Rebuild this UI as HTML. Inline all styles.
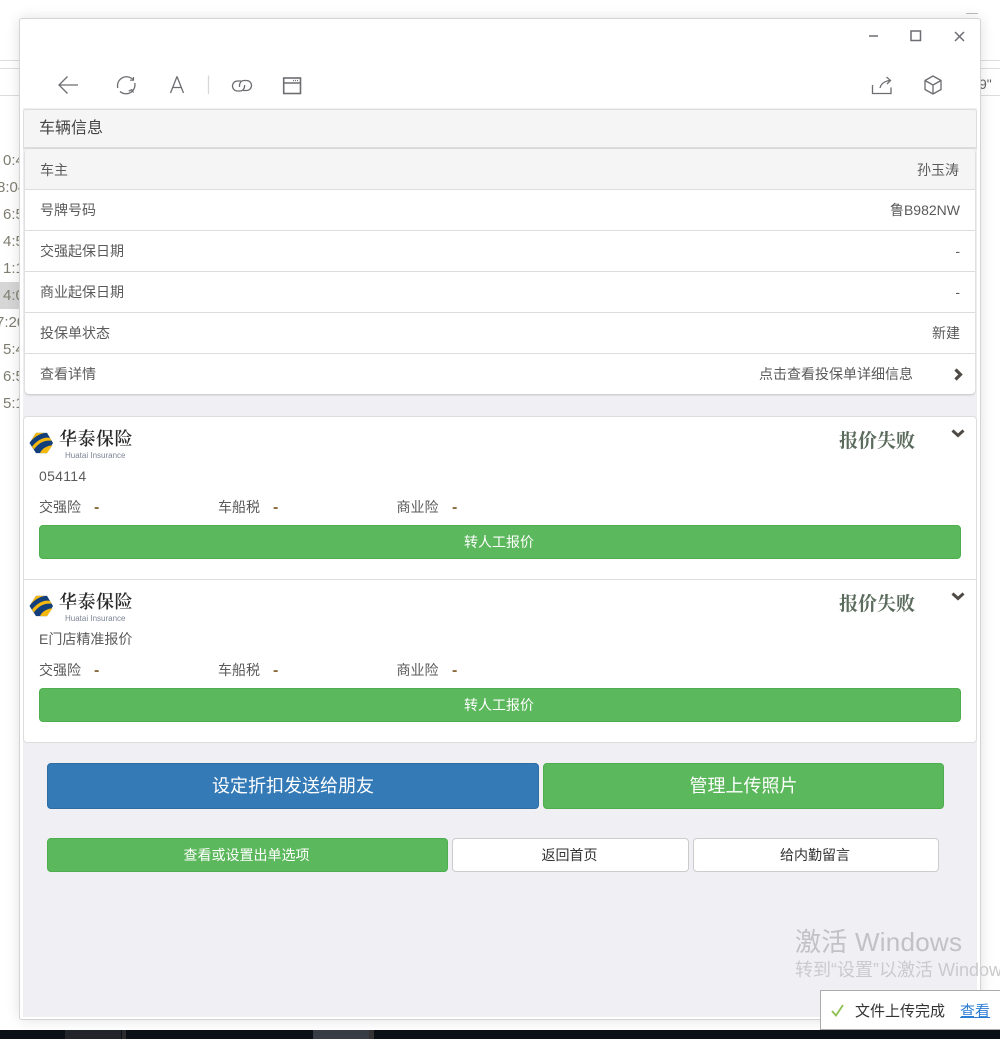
<!DOCTYPE html>
<html lang="zh-CN">
<head>
<meta charset="utf-8">
<title>车辆信息</title>
<style>
*{box-sizing:border-box}
html,body{margin:0;padding:0;width:1000px;height:1039px;overflow:hidden;background:#fff;font-family:"Liberation Sans","Noto Sans CJK SC",sans-serif;color:#555}
.a{position:absolute;white-space:nowrap}
.t{font-size:14px;line-height:20px;color:#5a5a5a}
.bgt{font-size:15px;color:#7f7d70;line-height:20px}
.win{position:absolute;left:19px;top:18px;width:962px;height:1002px;background:#fff;border:1px solid #d4d4d4;border-radius:3px;box-shadow:0 0 14px rgba(0,0,0,.12)}
.row{position:absolute;left:25px;width:950px;height:41px;background:#fff;border-bottom:1px solid #ddd}
.btn{position:absolute;text-align:center;border-radius:4px;color:#fff;font-size:14px}
.g{background:#5cb85c;border:1px solid #4cae4c}
.w{background:#fff;border:1px solid #ccc;color:#333}
.ttl{font-family:"Liberation Serif","Noto Serif CJK SC",serif;font-weight:700;font-size:19px;line-height:24px;color:#5a6b5c}
.dash{font-size:16px;line-height:20px;color:#8a6a3a;font-weight:700}
.lg{font-family:"Noto Serif CJK SC",serif;font-weight:600;font-size:18px;line-height:24px;letter-spacing:.5px;color:#2a2a2a}
.ls{font-size:8px;line-height:10px;color:#7d8595}
svg{position:absolute;overflow:visible}
</style>
</head>
<body>
<!-- background app behind window -->
<div class="a" style="left:0;top:60px;width:1000px;height:1px;background:#ddd"></div>
<div class="a" style="left:0;top:68px;width:1000px;height:1px;background:#ddd"></div>
<div class="a" style="left:0;top:95px;width:1000px;height:1px;background:#ddd"></div>
<div class="a" style="left:966px;top:13px;width:12px;height:1px;background:#bbb"></div>
<div class="a" style="left:979px;top:75px;font-size:14px;line-height:18px;color:#666">9"</div>
<div class="a" style="left:0;top:282px;width:20px;height:27px;background:#d6d6d6"></div>
<div class="a bgt" style="left:3px;top:151px">0:4</div>
<div class="a bgt" style="left:-3px;top:178px">8:04</div>
<div class="a bgt" style="left:3px;top:205px">6:5</div>
<div class="a bgt" style="left:3px;top:232px">4:5</div>
<div class="a bgt" style="left:3px;top:259px">1:1</div>
<div class="a bgt" style="left:3px;top:286px">4:0</div>
<div class="a bgt" style="left:-4px;top:313px">7:20</div>
<div class="a bgt" style="left:3px;top:340px">5:4</div>
<div class="a bgt" style="left:3px;top:367px">6:5</div>
<div class="a bgt" style="left:3px;top:394px">5:1</div>

<div class="win"></div>

<!-- window controls -->
<svg style="left:0;top:0" width="1000" height="110" fill="none" stroke="#6d6d72" stroke-width="1.300">
  <path d="M869 36h9" stroke-width="1.500"/>
  <rect x="911" y="31" width="9.500" height="9.500" stroke-width="1.500"/>
  <path d="M955 32l9 9M964 32l-9 9" stroke-width="1.500"/>
  <!-- toolbar -->
  <path d="M78 85H59M67.500 76.500L59 85l8.500 8.500"/>
  <path d="M117.800 88A9 9 0 0 1 133 79.500"/>
  <path d="M134.800 83A9 9 0 0 1 120 91.500"/>
  <path d="M133.500 77v3.200h-3.500" stroke-width="1.200"/>
  <path d="M133.500 92.500l-1.800-2.800-3 1.500" stroke-width="1.200"/>
  <path d="M170.500 93L177 76.500l6.500 16.500M172.800 87.500h8.500" stroke-linejoin="bevel"/>
  <path d="M208.500 75.500v18.500" stroke="#d8d8d8"/>
  <path d="M241 81H237.500A4.800 4.800 0 0 0 237.500 91H240C243 91 245 88 244.500 85"/>
  <path d="M243 90.500H246.500A4.800 4.800 0 0 0 246.500 80.500H244C241 80.500 239 83.500 239.500 87"/>
  <rect x="283.700" y="78" width="16.800" height="15.500" stroke-width="1.600"/>
  <path d="M284 83h16" stroke-width="1.500"/>
  <path d="M293 80.500h5" stroke-dasharray="1 1"/>
  <path d="M872.500 85v8.500h18.500v-6"/>
  <path d="M880 88c1-4 4.500-7 10-7.500M886.500 77l4 3.500-3.500 3.500"/>
  <path d="M933 76l8 4.500v9l-8 4.500-8-4.500v-9zM925 80.500l8 4.500 8-4.500M933 85v9" stroke-linejoin="round"/>
</svg>

<!-- page body -->
<div class="a" style="left:23px;top:108px;width:954px;height:909px;background:#efeff4"></div>

<div class="a" style="left:23px;top:109px;width:954px;height:40px;background:#f5f5f5;border:1px solid #ddd;border-bottom:2px solid #ddd;border-radius:3px 3px 0 0;padding-left:15px;font-size:16px;line-height:37px;color:#444">车辆信息</div>

<div class="a" style="left:25px;top:149px;width:950px;height:245px;background:#fff;border-radius:4px;box-shadow:0 1px 2px rgba(0,0,0,.2)"></div>
<div class="row" style="top:149px;background:#f5f5f5;border-radius:3px 3px 0 0"></div>
<div class="row" style="top:190px"></div>
<div class="row" style="top:231px"></div>
<div class="row" style="top:272px"></div>
<div class="row" style="top:313px"></div>
<div class="a t" style="left:40px;top:160px">车主</div>
<div class="a t" style="right:41px;top:160px">孙玉涛</div>
<div class="a t" style="left:40px;top:200px">号牌号码</div>
<div class="a t" style="right:40px;top:200px">鲁B982NW</div>
<div class="a t" style="left:40px;top:241px">交强起保日期</div>
<div class="a t" style="right:40px;top:241px">-</div>
<div class="a t" style="left:40px;top:282px">商业起保日期</div>
<div class="a t" style="right:40px;top:282px">-</div>
<div class="a t" style="left:40px;top:323px">投保单状态</div>
<div class="a t" style="right:40px;top:323px">新建</div>
<div class="a t" style="left:40px;top:364px">查看详情</div>
<div class="a t" style="left:759px;top:364px">点击查看投保单详细信息</div>
<svg style="left:950px;top:366px" width="16" height="16" fill="none" stroke="#4f4a45" stroke-width="3.200"><path d="M5.500 3.500l5 5-5 5"/></svg>

<!-- quote card -->
<div class="a" style="left:23px;top:416px;width:954px;height:327px;background:#fff;border:1px solid #ddd;border-radius:4px"></div>
<div class="a" style="left:24px;top:579px;width:952px;height:1px;background:#ddd"></div>

<!-- card 1 -->
<svg style="left:29px;top:432px" width="25" height="22" viewBox="0 0 25 24" preserveAspectRatio="none">
  <path d="M7 1h11l6 11-6 11H7L0.500 12z" fill="#123f7c"/>
  <path d="M1.500 10.500L7 1h9C10 2 5 6 1.500 10.500z" fill="#f4b80f"/>
  <path d="M3 16C8 9 15 5 21 6.500l1.500 3C15 8.500 9 12.500 5 19z" fill="#f4b80f"/>
  <path d="M11 23c2-5 7-8 12.500-8.500L18 23z" fill="#f4b80f"/>
</svg>
<div class="a lg" style="left:59px;top:426px">华泰保险</div>
<div class="a ls" style="left:65px;top:451px">Huatai Insurance</div>
<div class="a ttl" style="left:839px;top:430px">报价失败</div>
<svg style="left:950px;top:426px" width="16" height="16" fill="none" stroke="#4f4a45" stroke-width="3"><path d="M2.500 4.500l5.500 5 5.500-5"/></svg>
<div class="a" style="left:39px;top:466px;font-size:14px;line-height:20px;letter-spacing:.3px;color:#5a5a5a">054114</div>
<div class="a t" style="left:39px;top:497px">交强险</div>
<div class="a dash" style="left:94px;top:498px">-</div>
<div class="a t" style="left:218px;top:497px">车船税</div>
<div class="a dash" style="left:273px;top:498px">-</div>
<div class="a t" style="left:396.500px;top:497px">商业险</div>
<div class="a dash" style="left:452px;top:498px">-</div>
<div class="btn g" style="left:39px;top:525px;width:922px;height:34px;line-height:32px;padding-right:2px">转人工报价</div>

<!-- card 2 -->
<svg style="left:29px;top:595px" width="25" height="22" viewBox="0 0 25 24" preserveAspectRatio="none">
  <path d="M7 1h11l6 11-6 11H7L0.500 12z" fill="#123f7c"/>
  <path d="M1.500 10.500L7 1h9C10 2 5 6 1.500 10.500z" fill="#f4b80f"/>
  <path d="M3 16C8 9 15 5 21 6.500l1.500 3C15 8.500 9 12.500 5 19z" fill="#f4b80f"/>
  <path d="M11 23c2-5 7-8 12.500-8.500L18 23z" fill="#f4b80f"/>
</svg>
<div class="a lg" style="left:59px;top:589px">华泰保险</div>
<div class="a ls" style="left:65px;top:614px">Huatai Insurance</div>
<div class="a ttl" style="left:839px;top:593px">报价失败</div>
<svg style="left:950px;top:589px" width="16" height="16" fill="none" stroke="#4f4a45" stroke-width="3"><path d="M2.500 4.500l5.500 5 5.500-5"/></svg>
<div class="a t" style="left:39px;top:629px">E门店精准报价</div>
<div class="a t" style="left:39px;top:660px">交强险</div>
<div class="a dash" style="left:94px;top:661px">-</div>
<div class="a t" style="left:218px;top:660px">车船税</div>
<div class="a dash" style="left:273px;top:661px">-</div>
<div class="a t" style="left:396.500px;top:660px">商业险</div>
<div class="a dash" style="left:452px;top:661px">-</div>
<div class="btn g" style="left:39px;top:688px;width:922px;height:34px;line-height:32px;padding-right:2px">转人工报价</div>

<!-- action buttons -->
<div class="btn" style="left:47px;top:763px;width:492px;height:46px;line-height:44px;background:#337ab7;border:1px solid #2e6da4;font-size:18px">设定折扣发送给朋友</div>
<div class="btn g" style="left:543px;top:763px;width:401px;height:46px;line-height:44px;font-size:18px">管理上传照片</div>
<div class="btn g" style="left:47px;top:838px;width:401px;height:34px;line-height:32px;padding-right:2px">查看或设置出单选项</div>
<div class="btn w" style="left:452px;top:838px;width:237px;height:34px;line-height:32px;padding-right:2px">返回首页</div>
<div class="btn w" style="left:693px;top:838px;width:246px;height:34px;line-height:32px;padding-right:2px">给内勤留言</div>

<!-- watermark -->
<div class="a" style="left:795px;top:925px;font-size:26px;line-height:34px;letter-spacing:.25px;color:#c2c2c4">激活 Windows</div>
<div class="a" style="left:795px;top:958px;width:205px;overflow:hidden;font-size:18px;line-height:24px;color:#cbcbcd">转到“设置”以激活 Windows。</div>

<!-- toast -->
<div class="a" style="left:820px;top:990px;width:180px;height:40px;background:#fff;border:1px solid #aaa;border-right:0"></div>
<svg style="left:830px;top:1003px" width="16" height="15" fill="none" stroke="#8cc152" stroke-width="1.800"><path d="M2 8l4 4.500L13 2"/></svg>
<div class="a" style="left:855px;top:1002px;font-size:15px;line-height:20px;color:#333">文件上传完成</div>
<div class="a" style="left:960px;top:1002px;font-size:15px;line-height:20px;color:#2b7cd3;text-decoration:underline">查看</div>

<!-- taskbar -->
<div class="a" style="left:0;top:1030px;width:1000px;height:9px;background:#0b1017"></div>
<div class="a" style="left:65px;top:1030px;width:56px;height:9px;background:#212529"></div>
<div class="a" style="left:122px;top:1030px;width:4px;height:9px;background:#2a2c2e"></div>
<div class="a" style="left:313px;top:1030px;width:56px;height:9px;background:#383d45"></div>
<div class="a" style="left:369px;top:1030px;width:5px;height:9px;background:#333"></div>
</body>
</html>
